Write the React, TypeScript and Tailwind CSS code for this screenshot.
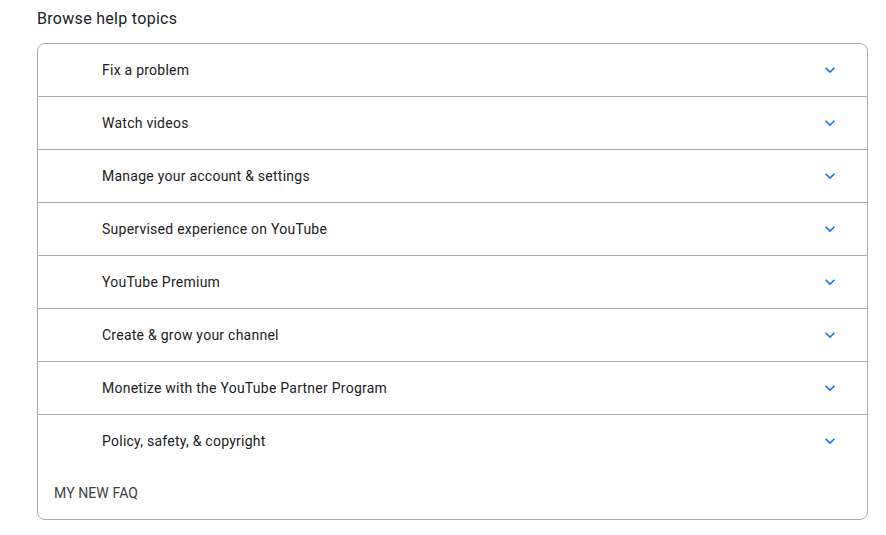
import React from "react";

const topics = [
  "Fix a problem",
  "Watch videos",
  "Manage your account & settings",
  "Supervised experience on YouTube",
  "YouTube Premium",
  "Create & grow your channel",
  "Monetize with the YouTube Partner Program",
  "Policy, safety, & copyright",
];

function Chevron() {
  return (
    <svg width="20" height="20" viewBox="0 0 24 24" fill="#1a73e8" className="-mt-[1px]">
      <path d="M16.59 8.59L12 13.17 7.41 8.59 6 10l6 6 6-6z" />
    </svg>
  );
}

export default function App() {
  return (
    <div
      className="w-[886px] h-[535px] bg-white pl-[37px] pt-[7px]"
      style={{ fontFamily: "Roboto, 'Open Sans', Arial, sans-serif" }}
    >
      <h2 className="text-[16px] leading-[24px] tracking-[0.3px] text-[#202124] mb-[12px]">Browse help topics</h2>
      <div className="w-[831px] border border-[#ababab] rounded-[8px]">
        {topics.map((t, i) => (
          <div
            key={t}
            className={`h-[53px] flex items-center justify-between pl-[64px] pr-[27px] ${
              i < topics.length - 1 ? "border-b border-[#ababab]" : ""
            }`}
          >
            <span className="text-[14px] leading-[20px] tracking-[0.25px] text-[#202124] -mt-[1px]">{t}</span>
            <Chevron />
          </div>
        ))}
        <div className="h-[51px] flex items-center pl-[16px]">
          <span className="text-[14px] tracking-[0.1px] text-[#3c4043]">MY NEW FAQ</span>
        </div>
      </div>
    </div>
  );
}
